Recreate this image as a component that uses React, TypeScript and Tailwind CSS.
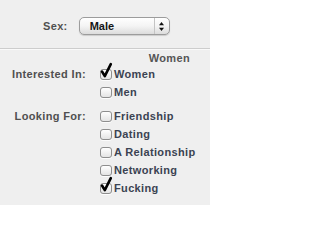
import { ReactNode } from "react";

const font = { fontFamily: '"Liberation Sans", Arial, sans-serif' };

function Checkbox({ checked }: { checked?: boolean }) {
  return (
    <span className="relative inline-block w-[12px] h-[11px] shrink-0 rounded-[3px] border border-[#8e8e8e] bg-gradient-to-b from-white to-[#e4e4e4] shadow-[0_1px_0_rgba(255,255,255,0.8)]">
      {checked && (
        <svg className="absolute left-[-1px] top-[-8px]" width="13" height="17" viewBox="0 0 13 17">
          <path d="M2 9.5 L4.8 14.2 L10.8 2.2" fill="none" stroke="#000" strokeWidth="2.6" strokeLinecap="round" strokeLinejoin="round" />
        </svg>
      )}
    </span>
  );
}

function Option({ label, checked }: { label: string; checked?: boolean }) {
  return (
    <div className="flex h-[18px] items-center gap-[2px]">
      <Checkbox checked={checked} />
      <span className="text-[11px] font-bold leading-[18px] tracking-[0.35px] text-[#3b4352]">{label}</span>
    </div>
  );
}

function Row({ label, children }: { label: string; children: ReactNode }) {
  return (
    <div className="flex">
      <div className="w-[87px] pr-[1px] text-right text-[11px] font-bold leading-[18px] tracking-[0.35px] text-[#505050]">{label}</div>
      <div className="pl-[13px] flex flex-col">{children}</div>
    </div>
  );
}

export default function App() {
  return (
    <div className="w-[210px] h-[205px] overflow-hidden bg-[#efefef]" style={font}>
      <div className="h-[48px] pt-[17px] pl-[43px] flex items-start gap-[11px]">
        <span className="text-[11px] font-bold leading-[18px] tracking-[0.35px] text-[#505050]">Sex:</span>
        <div className="relative flex w-[91px] h-[18px] items-center rounded-[5px] border border-[#9c9c9c] bg-gradient-to-b from-white via-[#f4f4f4] to-[#dcdcdc] shadow-[0_1px_1px_rgba(0,0,0,0.15)]">
          <span className="flex-1 pl-[10px] text-[11px] font-bold leading-[16px] text-[#151515]">Male</span>
          <div className="w-[15px] h-full border-l border-[#c4c4c4] flex flex-col items-center justify-center">
            <svg width="5" height="9" viewBox="0 0 5 9">
              <path d="M2.5 0 L5 3.2 L0 3.2 Z" fill="#111" />
              <path d="M2.5 9 L5 5.8 L0 5.8 Z" fill="#111" />
            </svg>
          </div>
        </div>
      </div>
      <div className="h-px bg-[#cdcdcd]" />
      <div className="h-px bg-[#fafafa]" />
      <div className="h-[15px] pr-[20px] pt-[2px] text-right text-[11px] font-bold leading-[13px] tracking-[0.35px] text-[#555]">Women</div>
      <Row label="Interested In:">
        <Option label="Women" checked />
        <Option label="Men" />
      </Row>
      <div className="h-[6px]" />
      <Row label="Looking For:">
        <Option label="Friendship" />
        <Option label="Dating" />
        <Option label="A Relationship" />
        <Option label="Networking" />
        <Option label="Fucking" checked />
      </Row>
    </div>
  );
}
